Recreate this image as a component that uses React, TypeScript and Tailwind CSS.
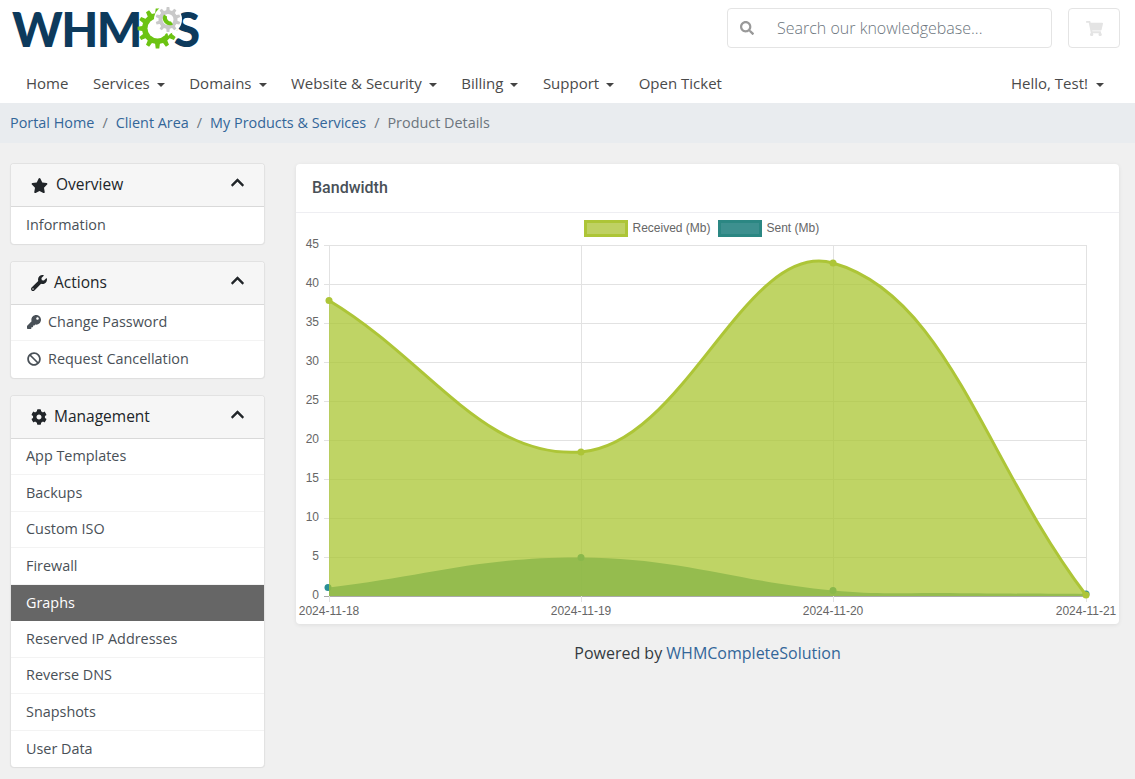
import React from "react";
import { FaStar, FaWrench, FaKey, FaBan, FaCog, FaSearch, FaShoppingCart, FaChevronUp } from "react-icons/fa";

type P = [number, number];

function spline(pts: P[]) {
  const t = 0.4;
  const cps = pts.map((p, i) => {
    const a = pts[i - 1] || p;
    const b = pts[i + 1] || p;
    const d01 = Math.hypot(p[0] - a[0], p[1] - a[1]);
    const d12 = Math.hypot(b[0] - p[0], b[1] - p[1]);
    const sum = d01 + d12 || 1;
    const fa = (t * d01) / sum;
    const fb = (t * d12) / sum;
    return {
      prev: [p[0] - fa * (b[0] - a[0]), p[1] - fa * (b[1] - a[1])] as P,
      next: [p[0] + fb * (b[0] - a[0]), p[1] + fb * (b[1] - a[1])] as P,
    };
  });
  let d = `M${pts[0][0]} ${pts[0][1]}`;
  for (let i = 1; i < pts.length; i++) {
    const c1 = cps[i - 1].next;
    const c2 = cps[i].prev;
    d += ` C${c1[0]} ${c1[1]} ${c2[0]} ${c2[1]} ${pts[i][0]} ${pts[i][1]}`;
  }
  return d;
}

function gear(cx: number, cy: number, ro: number, ri: number, n: number) {
  let d = "";
  const step = (Math.PI * 2) / n;
  for (let i = 0; i < n; i++) {
    const a = i * step - Math.PI / 2;
    const q = [
      [ri, a - step * 0.3],
      [ro, a - step * 0.17],
      [ro, a + step * 0.17],
      [ri, a + step * 0.3],
    ];
    q.forEach(([r, an], j) => {
      d += `${i === 0 && j === 0 ? "M" : "L"}${(cx + r * Math.cos(an)).toFixed(2)} ${(cy + r * Math.sin(an)).toFixed(2)} `;
    });
  }
  return d + "Z";
}

function Logo() {
  return (
    <div className="relative flex w-[190px] h-[50px] text-[48px] leading-[50px] font-black text-[#0d3a5c]" style={{ fontFamily: "Lato, sans-serif" }}>
      <span className="tracking-[-1.6px]">WHM</span>
      <span className="ml-[33px]">S</span>
      <svg className="absolute left-[120px] top-[-4px]" width="60" height="50" viewBox="0 0 60 50">
        <path d={gear(25.5, 28.5, 20, 15.5, 12)} fill="#6cc312" />
        <circle cx="25.5" cy="28.5" r="10" fill="#fff" />
        <path d="M34 22 L46 26 L36 36 Z" fill="#fff" />
        <circle cx="36" cy="19.5" r="14" fill="#fff" />
        <path d={gear(36, 19.5, 12.5, 9.5, 10)} fill="#c9c9c9" />
        <circle cx="36" cy="19.5" r="5.5" fill="#fff" />
        <path d="M32 14.5 A7 7 0 0 0 41 24.5 L39 21.5 A4 4 0 0 1 35 16.5 Z" fill="#6cc312" />
      </svg>
    </div>
  );
}

const NAV: [string, boolean][] = [
  ["Home", false],
  ["Services", true],
  ["Domains", true],
  ["Website & Security", true],
  ["Billing", true],
  ["Support", true],
  ["Open Ticket", false],
];

function Caret() {
  return <span className="inline-block ml-[7px] align-[2px] border-t-[4px] border-x-[4px] border-b-0 border-t-[#444] border-x-transparent" />;
}

function Panel({ icon, title, children, gap }: { icon: React.ReactNode; title: string; children: React.ReactNode; gap: string }) {
  return (
    <div className="mb-[17px] bg-white rounded-[4px] border-x border-t border-[#e2e2e2] shadow-[0_1px_1px_rgba(0,0,0,0.08)] overflow-hidden">
      <div className="h-[43px] bg-[#f6f6f6] border-b border-[#d9d9d9] flex items-center pl-[20px] pr-[19px] text-[15.5px] text-[#212529]">
        <span className={`flex justify-center ${gap}`}>{icon}</span>
        <span className="flex-1">{title}</span>
        <FaChevronUp className="text-[15px] text-[#212529] mb-[5px]" />
      </div>
      {children}
    </div>
  );
}

function Item({ children, active, last }: { children: React.ReactNode; active?: boolean; last?: boolean }) {
  return (
    <div
      className={`h-[36.5px] flex items-center px-[15px] text-[14.4px] ${active ? "bg-[#666666] text-white font-medium" : "text-[#495057]"} ${last || active ? "" : "border-b border-[#f3f3f3]"}`}
    >
      {children}
    </div>
  );
}

const X = [329, 581, 833, 1086];
const yOf = (v: number) => 596 - v * 7.8;
const received: P[] = [[X[0], 300.5], [X[1], 452], [X[2], 263], [X[3], 595]];
const sent: P[] = [[X[0], 587.5], [X[1], 557.5], [X[2], 590.5], [X[3], 594]];
const sentPath: P[] = [sent[0], sent[1], sent[2], [950, 593], sent[3]];
const OX = 296;
const OY = 213;

function Chart() {
  const dR = spline(received);
  const dS = spline(sentPath);
  return (
    <svg className="block" width="823" height="411" viewBox={`${OX} ${OY} 823 411`} style={{ fontFamily: "'Liberation Sans', sans-serif" }}>
      <rect x="585.5" y="221.5" width="41" height="14" fill="#bfd163" stroke="#adc537" strokeWidth="3" />
      <text x="632.5" y="232" fontSize="12" fill="#666">Received (Mb)</text>
      <rect x="719.5" y="221.5" width="41" height="14" fill="#3d908f" stroke="#2b8783" strokeWidth="3" />
      <text x="766.5" y="232" fontSize="12" fill="#666">Sent (Mb)</text>

      {[0, 5, 10, 15, 20, 25, 30, 35, 40, 45].map((v) => (
        <g key={v}>
          <line x1="324" x2="1087" y1={yOf(v) + 0.5} y2={yOf(v) + 0.5} stroke={v === 0 ? "#aaa" : "#e2e2e2"} strokeWidth="1" />
          <text x="319" y={yOf(v) + 2.5} fontSize="12" fill="#666" textAnchor="end">{v}</text>
        </g>
      ))}
      {X.map((x, i) => (
        <g key={x}>
          <line x1={x + 0.5} x2={x + 0.5} y1="245" y2="602" stroke="#e2e2e2" strokeWidth="1" />
          <text x={i === 3 ? 1086 : x} y="615" fontSize="12" fill="#666" textAnchor="middle">{`2024-11-${18 + i}`}</text>
        </g>
      ))}

      <path d={`${dS} L${X[3]} 596 L${X[0]} 596 Z`} fill="rgba(32,130,135,0.75)" />
      {sent.map((p) => <circle key={p[0]} cx={p[0] - (p[0] === X[0] ? 1 : 0)} cy={p[1]} r="3.5" fill="#2a8f96" />)}
      <path d={`${dR} L${X[3]} 596 L${X[0]} 596 Z`} fill="rgba(170,198,50,0.75)" />
      <path d={dR} fill="none" stroke="#adc537" strokeWidth="3" />
      {received.map((p) => <circle key={p[0]} cx={p[0]} cy={p[1]} r="3.5" fill="#adc537" />)}
    </svg>
  );
}

export default function App() {
  return (
    <div className="h-[779px] overflow-hidden bg-[#f0f0f0] text-[14.4px]" style={{ fontFamily: "'Open Sans', sans-serif" }}>
      <header className="bg-white">
        <div className="h-[66px] flex items-start pl-[12px] pr-[15px]">
          <div className="mt-[4px] flex-1">
            <Logo />
          </div>
          <div className="mt-[8px] w-[325px] h-[40px] rounded-[4px] border border-[#e4e4e4] flex items-center pl-[12px]">
            <FaSearch className="text-[14px] text-[#999]" />
            <span className="ml-[23px] text-[16px] font-light text-[#6c757d]">Search our knowledgebase...</span>
          </div>
          <div className="mt-[8px] ml-[16px] w-[52px] h-[40px] rounded-[4px] border border-[#e4e4e4] flex items-center justify-center">
            <FaShoppingCart className="text-[17px] text-[#e4e4e4]" />
          </div>
        </div>
        <nav className="h-[37px] flex items-center pl-[26px] pr-[31px] pb-[2px] text-[15px] text-[#4a4a4a]">
          {NAV.map(([n, c]) => (
            <span key={n} className="mr-[24.5px] whitespace-nowrap">
              {n}
              {c && <Caret />}
            </span>
          ))}
          <span className="ml-auto whitespace-nowrap">
            <span className="mr-px">Hello, Test!</span>
            <Caret />
          </span>
        </nav>
      </header>
      <div className="h-[40px] bg-[#e9ecef] flex items-center pl-[10px] pb-[1px] text-[#6c757d]">
        <span className="text-[#336699]">Portal Home</span>
        <span className="mx-[8px]">/</span>
        <span className="text-[#336699]">Client Area</span>
        <span className="mx-[8px]">/</span>
        <span className="text-[#336699]">My Products &amp; Services</span>
        <span className="mx-[8px]">/</span>
        <span>Product Details</span>
      </div>
      <main className="flex pt-[20px] pl-[10px] pr-[15px]">
        <aside className="w-[255px] shrink-0">
          <Panel icon={<FaStar className="text-[17px]" />} title="Overview" gap="mr-[8px]">
            <Item last>Information</Item>
          </Panel>
          <Panel icon={<FaWrench className="text-[16px]" />} title="Actions" gap="mr-[7px]">
            <Item>
              <FaKey className="text-[14px] text-[#495057] mr-[7px] ml-[1px]" />
              Change Password
            </Item>
            <Item last>
              <FaBan className="text-[14px] text-[#495057] mr-[7px] ml-[1px]" />
              Request Cancellation
            </Item>
          </Panel>
          <Panel icon={<FaCog className="text-[16px]" />} title="Management" gap="mr-[7px]">
            <Item>App Templates</Item>
            <Item>Backups</Item>
            <Item>Custom ISO</Item>
            <Item>Firewall</Item>
            <Item active>Graphs</Item>
            <Item>Reserved IP Addresses</Item>
            <Item>Reverse DNS</Item>
            <Item>Snapshots</Item>
            <Item last>User Data</Item>
          </Panel>
        </aside>
        <section className="ml-[31px] mt-[1px] w-[823px]">
          <div className="bg-white rounded-[4px] shadow-[0_1px_4px_rgba(0,0,0,0.08)] overflow-hidden h-[460px]">
            <div className="h-[49px] flex items-center px-[16px] border-b border-[#eeeef2] text-[16px] font-medium text-[#495057]" style={{ fontFamily: "Roboto, sans-serif" }}>
              Bandwidth
            </div>
            <Chart />
          </div>
          <div className="mt-[18px] text-center text-[16px] leading-[22px] text-[#343a40]">
            Powered by <span className="text-[#336699]">WHMCompleteSolution</span>
          </div>
        </section>
      </main>
    </div>
  );
}
